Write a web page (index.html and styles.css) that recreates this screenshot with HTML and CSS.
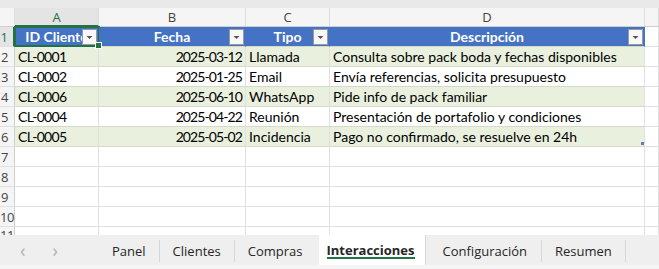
FILE: index.html
```html
<!DOCTYPE html>
<html lang="es">
<head>
    <meta charset="UTF-8">
    <title>Interacciones</title>
    <link rel="stylesheet" href="styles.css">
</head>
<body>
    <div class="app">
        <div class="top-strip"></div>
        <div class="sheet">
            <div class="grid">
                <div class="corner"></div>
                <div class="col-head selected">A</div>
                <div class="col-head">B</div>
                <div class="col-head">C</div>
                <div class="col-head">D</div>
                <div class="col-head"></div>

                <div class="row-head selected">1</div>
                <div class="cell th active"><span>ID Cliente</span><svg class="dd" width="15" height="16" viewBox="0 0 15 16"><rect x="0.5" y="0.5" width="14" height="15" fill="#f8f8f8" stroke="#9a9a9a"/><path d="M4.5 7h6l-3 3z" fill="#555"/></svg></div>
                <div class="cell th"><span>Fecha</span><svg class="dd" width="15" height="16" viewBox="0 0 15 16"><rect x="0.5" y="0.5" width="14" height="15" fill="#f8f8f8" stroke="#9a9a9a"/><path d="M4.5 7h6l-3 3z" fill="#555"/></svg></div>
                <div class="cell th"><span>Tipo</span><svg class="dd" width="15" height="16" viewBox="0 0 15 16"><rect x="0.5" y="0.5" width="14" height="15" fill="#f8f8f8" stroke="#9a9a9a"/><path d="M4.5 7h6l-3 3z" fill="#555"/></svg></div>
                <div class="cell th"><span>Descripción</span><svg class="dd" width="15" height="16" viewBox="0 0 15 16"><rect x="0.5" y="0.5" width="14" height="15" fill="#f8f8f8" stroke="#9a9a9a"/><path d="M4.5 7h6l-3 3z" fill="#555"/></svg></div>
                <div class="cell"></div>

                <div class="row-head">2</div>
                <div class="cell band code">CL-0001</div>
                <div class="cell band num">2025-03-12</div>
                <div class="cell band">Llamada</div>
                <div class="cell band">Consulta sobre pack boda y fechas disponibles</div>
                <div class="cell"></div>

                <div class="row-head">3</div>
                <div class="cell tb code">CL-0002</div>
                <div class="cell tb num">2025-01-25</div>
                <div class="cell tb">Email</div>
                <div class="cell tb">Envía referencias, solicita presupuesto</div>
                <div class="cell"></div>

                <div class="row-head">4</div>
                <div class="cell band code">CL-0006</div>
                <div class="cell band num">2025-06-10</div>
                <div class="cell band">WhatsApp</div>
                <div class="cell band">Pide info de pack familiar</div>
                <div class="cell"></div>

                <div class="row-head">5</div>
                <div class="cell tb code">CL-0004</div>
                <div class="cell tb num">2025-04-22</div>
                <div class="cell tb">Reunión</div>
                <div class="cell tb">Presentación de portafolio y condiciones</div>
                <div class="cell"></div>

                <div class="row-head">6</div>
                <div class="cell band code">CL-0005</div>
                <div class="cell band num">2025-05-02</div>
                <div class="cell band">Incidencia</div>
                <div class="cell band table-end">Pago no confirmado, se resuelve en 24h</div>
                <div class="cell"></div>

                <div class="row-head">7</div>
                <div class="cell"></div><div class="cell"></div><div class="cell"></div><div class="cell"></div><div class="cell"></div>
                <div class="row-head">8</div>
                <div class="cell"></div><div class="cell"></div><div class="cell"></div><div class="cell"></div><div class="cell"></div>
                <div class="row-head">9</div>
                <div class="cell"></div><div class="cell"></div><div class="cell"></div><div class="cell"></div><div class="cell"></div>
                <div class="row-head">10</div>
                <div class="cell"></div><div class="cell"></div><div class="cell"></div><div class="cell"></div><div class="cell"></div>
                <div class="row-head last">11</div>
                <div class="cell"></div><div class="cell"></div><div class="cell"></div><div class="cell"></div><div class="cell"></div>
            </div>
        </div>
        <div class="tab-bar">
            <div class="nav">
                <span class="arrow">&#8249;</span>
                <span class="arrow">&#8250;</span>
            </div>
            <div class="tab">Panel</div>
            <div class="tab">Clientes</div>
            <div class="tab before-current">Compras</div>
            <div class="tab current">Interacciones</div>
            <div class="tab wide">Configuración</div>
            <div class="tab">Resumen</div>
        </div>
    </div>
</body>
</html>
```

FILE: styles.css
```css
body {
    margin: 0;
    background: #ffffff;
    font-family: Lato, "Liberation Sans", sans-serif;
}
.app {
    width: 659px;
    height: 269px;
    display: flex;
    flex-direction: column;
    overflow: hidden;
}
.top-strip {
    height: 8px;
    background: #e9e9e9;
    flex-shrink: 0;
}
.sheet {
    height: 227px;
    overflow: hidden;
    flex-shrink: 0;
}
.grid {
    display: grid;
    grid-template-columns: 15px 84px 147px 84px 315px 1fr;
    grid-template-rows: 19px;
    grid-auto-rows: 20px;
}
.grid > div {
    box-sizing: border-box;
    border-right: 1px solid #e0e0e0;
    border-bottom: 1px solid #e0e0e0;
    white-space: nowrap;
    overflow: hidden;
}
.corner, .col-head {
    background: #f5f5f5;
    border-bottom-color: #cfcfcf !important;
}
.col-head {
    font-family: "Open Sans", sans-serif;
    font-size: 13px;
    color: #444;
    text-align: center;
    line-height: 19px;
    border-right-color: #dcdcdc !important;
}
.col-head.selected {
    background: #e4e4e4;
    color: #217346;
    border-bottom: 2px solid #217346 !important;
}
.row-head {
    background: #f5f5f5;
    font-family: "Open Sans", sans-serif;
    font-size: 13px;
    color: #444;
    text-align: center;
    padding-right: 5px;
    line-height: 20px;
    border-right-color: #cfcfcf !important;
    letter-spacing: -0.5px;
}
.row-head.last {
    line-height: 17px;
}
.row-head.selected {
    background: #e4e4e4;
    color: #217346;
    border-right: 2px solid #217346 !important;
}
.cell {
    font-size: 14px;
    line-height: 20px;
    padding: 0 3px;
    color: #000;
}
.code {
    letter-spacing: -0.7px;
}
.num {
    text-align: right;
    letter-spacing: -0.9px;
    padding-right: 3px;
}
.band {
    background: #eaf0de;
    border-bottom-color: #d3dac6 !important;
}
.tb {
    border-bottom-color: #d3dac6 !important;
}
.th {
    background: #4472c4;
    color: #ffffff;
    font-weight: bold;
    text-align: center;
    position: relative;
    overflow: visible !important;
    border-right-color: #4472c4 !important;
    border-bottom-color: #d3dac6 !important;
}
.th span {
    display: block;
    overflow: hidden;
}
.th .dd {
    position: absolute;
    right: 1px;
    top: 2px;
}
.active::after {
    content: "";
    position: absolute;
    left: -1px;
    top: -1px;
    right: -2px;
    bottom: -1px;
    border: 2px solid #217346;
}
.active::before {
    content: "";
    position: absolute;
    right: -4px;
    bottom: -3px;
    width: 5px;
    height: 5px;
    background: #217346;
    border: 1px solid #ffffff;
    z-index: 2;
}
.table-end {
    position: relative;
}
.table-end::after {
    content: "";
    position: absolute;
    right: 0;
    bottom: 1px;
    width: 3px;
    height: 3px;
    background: #5a7fb8;
}
.tab-bar {
    flex: 1;
    display: flex;
    background: #efefef;
    border-bottom: 4px solid #f5f5f5;
    font-family: "Open Sans", sans-serif;
    font-size: 13px;
    color: #262626;
}
.nav {
    width: 99px;
    display: flex;
    align-items: center;
    gap: 27px;
    padding-left: 20px;
    box-sizing: border-box;
}
.arrow {
    color: #b0b0b0;
    font-size: 18px;
    line-height: 20px;
}
.tab {
    padding: 0 13px;
    display: flex;
    align-items: center;
    border-right: 1px solid #d6d6d6;
    margin: 5px 0 3px;
}
.tab.before-current {
    padding-right: 16px;
    border-right: none;
}
.tab.wide {
    padding: 0 14px 0 17px;
}
.tab.current {
    background: #ffffff;
    font-weight: bold;
    margin: 0;
    padding: 0 10px 0 8px;
    position: relative;
}
.tab.current::after {
    content: "";
    position: absolute;
    left: 8px;
    right: 10px;
    bottom: 6px;
    height: 2px;
    background: #217346;
}
```
